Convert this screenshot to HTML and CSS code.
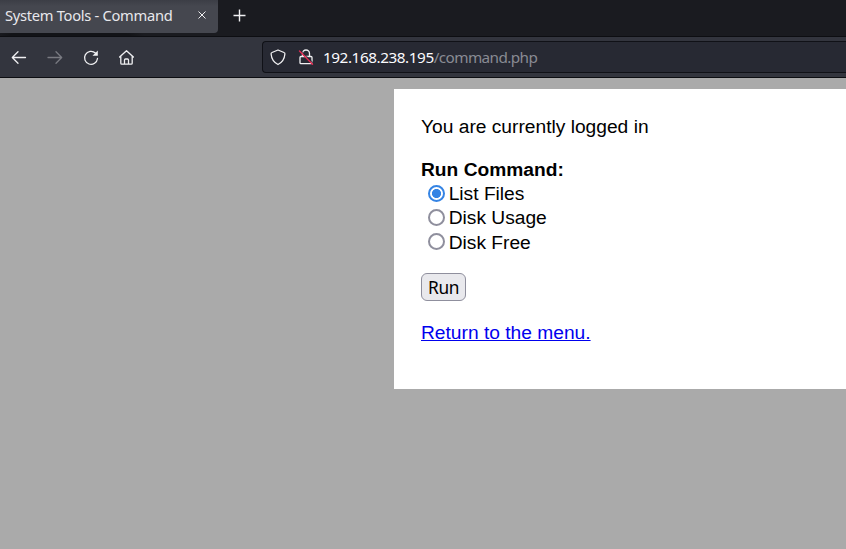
FILE: index.html
```html
<!DOCTYPE html>
<html lang="en">
<head>
<meta charset="utf-8">
<title>System Tools - Command</title>
<link rel="stylesheet" href="styles.css">
</head>
<body>
<header class="tabs">
  <div class="tab"><span class="tab-title">System Tools - Command</span>
    <svg class="close" width="10" height="10" viewBox="0 0 10 10"><path d="M1.5 1.5l7 7m0-7l-7 7"/></svg>
  </div>
  <svg class="plus" width="14" height="14" viewBox="0 0 14 14"><path d="M7.5 1.5v12M1.5 7.5h12"/></svg>
</header>
<nav class="toolbar">
  <svg class="icon" width="18" height="18" viewBox="0 0 18 18"><path d="M15.500 9.500H2.5M8 3.700L2.300 9.500l5.700 5.800"/></svg>
  <svg class="icon dim" width="18" height="18" viewBox="0 0 18 18"><path d="M2 9.500h13.500M10 3.700l5.700 5.800L10 15.300"/></svg>
  <svg class="icon" width="18" height="18" viewBox="0 0 18 18"><path d="M13.400 5A6.500 6.500 0 1 0 15.500 10.500"/><path class="solid" d="M15.800 2.500v5.300h-5.300z"/></svg>
  <svg class="icon" width="18" height="18" viewBox="0 0 18 18"><path d="M1.600 9.100L8.500 2.700l6.900 6.400M2.800 8.200v7q0 1 1 1h9.400q1 0 1-1v-7M6.500 16v-4q0-1 1-1h2q1 0 1 1v4"/></svg>
  <div class="address">
    <svg class="icon" width="16" height="18" viewBox="0 0 16 18"><path d="M8 2l6 2.500q1 .3.900 1.500Q14.300 13.400 8 16.500 1.700 13.400 1.100 6q-.1-1.200.9-1.500z"/></svg>
    <svg class="icon lock" width="16" height="18" viewBox="0 0 16 18"><path d="M4.500 8V5.500a3.500 3.500 0 0 1 7 0V8M3 8.500h10q1 0 1 1v5.200q0 1-1 1H3q-1 0-1-1V9.500q0-1 1-1z"/><path class="gap" d="M2.500 2.200l13 13"/><path class="slash" d="M1.500 3l13 13.200"/></svg>
    <span class="url"><span class="host">192.168.238.195</span>/command.php</span>
  </div>
</nav>
<main class="panel">
  <p class="status">You are currently logged in</p>
  <form class="form">
    <strong class="heading">Run Command:</strong>
    <label class="option"><input class="radio" type="radio" name="command" checked>List Files</label>
    <label class="option"><input class="radio" type="radio" name="command">Disk Usage</label>
    <label class="option"><input class="radio" type="radio" name="command">Disk Free</label>
    <button class="run" type="button">Run</button>
  </form>
  <a class="return" href="#">Return to the menu.</a>
</main>
</body>
</html>
```
FILE: styles.css
```css
* { box-sizing: border-box; }
body { margin: 0; height: 549px; overflow: hidden; background: #aaa; font: 19.2px/24.3px "Liberation Sans", sans-serif; color: #000; }
svg { flex: none; fill: none; stroke: #f0f0f2; }
.tabs { display: flex; height: 37px; background: radial-gradient(ellipse 75px 9px at 70px 36px, #121317 80%, #1a1b20); border-bottom: 1px solid #0d0e12; font-family: "Noto Sans", sans-serif; }
.tab { width: 218px; height: 33px; display: flex; background: linear-gradient(#3c3e46, #45474f 6px); border-radius: 0 0 4px 0; color: #e8e8ec; }
.tab-title { width: 192px; padding: 3px 0 0 5px; font-size: 14.7px; letter-spacing: -0.29px; white-space: nowrap; }
.close { margin: 10px 0 0 5px; stroke-width: 1; }
.plus { margin: 8px 0 0 14px; stroke-width: 1.4; }
.toolbar { display: flex; height: 41px; padding-left: 10px; gap: 18px; align-items: center; background: #33353e; border-bottom: 1px solid #0d0e12; }
.icon { stroke-width: 1.3; stroke-linejoin: round; stroke-linecap: round; }
.dim { stroke: #797a81; }
.solid { fill: #f0f0f2; stroke: none; }
.address { display: flex; align-items: center; flex: 1; height: 32px; margin-left: 108px; padding-left: 7px; background: #272933; border: 1px solid #101117; border-right: 0; border-radius: 4px 0 0 4px; }
.lock { margin: 0 9px 0 12px; }
.gap { stroke: #272933; stroke-width: 1; }
.slash { stroke: #e22850; stroke-width: 1.4; }
.url { font: 15.3px/24px "Noto Sans", sans-serif; letter-spacing: -0.6px; color: #898b93; white-space: nowrap; }
.host { color: #fbfbfe; letter-spacing: -0.44px; }
.panel { margin: 11px 0 0 394px; height: 300px; padding: 26px 27px; background: #fff; }
.status { margin: 0 0 19px; }
.form { display: flex; flex-direction: column; align-items: flex-start; }
.heading { height: 24px; }
.option { display: flex; align-items: flex-start; height: 24px; padding-left: 7px; line-height: 24px; }
.option:nth-of-type(3) { line-height: 25.500px; }
.radio { appearance: none; width: 17px; height: 17px; margin: 3px 3.700px 0 0; border: 2px solid #8f8f9d; border-radius: 50%; background: #fff; }
.radio:checked { border-color: #3584e4; background: radial-gradient(circle, #3584e4 4.200px, #fff 4.900px); }
.run { width: 45px; height: 28px; margin: 19px 0 20px; padding: 2px 0 0; border: 1px solid #8f8f9d; border-radius: 6px; background: #e9e9ed; font: 17.3px/24px "Noto Sans", sans-serif; letter-spacing: -0.4px; color: #000; }
.return { color: #0000ee; text-decoration: underline; }
```
